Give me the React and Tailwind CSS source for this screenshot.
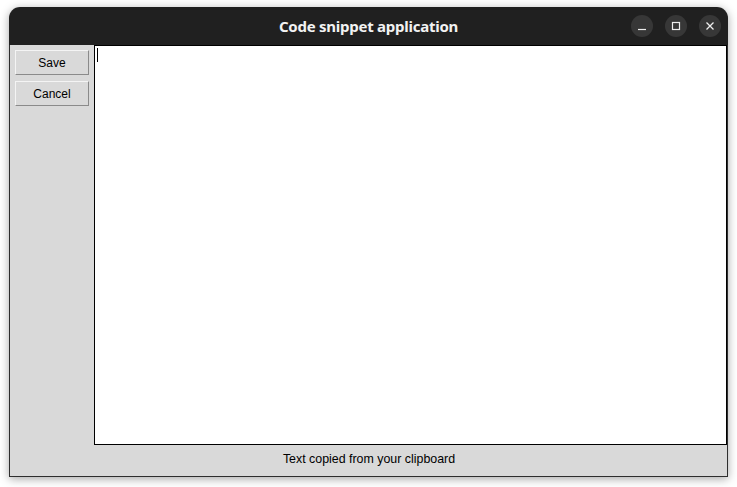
import React from 'react'

function WinButton({ children }) {
  return (
    <div className="w-[22px] h-[22px] rounded-full bg-[#373737] flex items-center justify-center">
      {children}
    </div>
  )
}

function TkButton({ label }) {
  return (
    <button className="w-[74px] h-[25px] bg-[#d9d9d9] border border-t-[#f4f4f4] border-l-[#f4f4f4] border-r-[#8a8a8a] border-b-[#8a8a8a] text-[12px] text-black font-['Liberation_Sans',sans-serif] flex items-center justify-center">
      {label}
    </button>
  )
}

export default function App() {
  return (
    <div className="w-[737px] h-[487px] bg-white pt-[7px] pl-[9px]">
      <div className="w-[719px] h-[470px] flex flex-col rounded-t-[11px] shadow-[0_2px_10px_rgba(0,0,0,0.35)]">
        {/* barra de título */}
        <div className="h-[38px] bg-[#202020] rounded-t-[11px] relative flex items-center justify-center">
          <span className="text-[15px] font-bold text-[#f2f2f2] font-['Noto_Sans',sans-serif] tracking-[-0.25px]">
            Code snippet application
          </span>
          <div className="absolute right-[7px] top-[8px] flex gap-[12px]">
            <WinButton>
              <svg width="10" height="10" viewBox="0 0 10 10">
                <path d="M1 8.5h8" stroke="#eee" strokeWidth="1.2" />
              </svg>
            </WinButton>
            <WinButton>
              <svg width="10" height="10" viewBox="0 0 10 10">
                <rect x="1.5" y="1.5" width="7" height="7" fill="none" stroke="#eee" strokeWidth="1.2" />
              </svg>
            </WinButton>
            <WinButton>
              <svg width="10" height="10" viewBox="0 0 10 10">
                <path d="M1.5 1.5l7 7M8.5 1.5l-7 7" stroke="#eee" strokeWidth="1.3" />
              </svg>
            </WinButton>
          </div>
        </div>

        {/* contenido */}
        <div className="flex-1 bg-[#d9d9d9] border-l border-r border-b border-[#2e2e2e] flex flex-col">
          <div className="flex h-[400px]">
            <div className="w-[84px] pl-[5px] pt-[5px] flex flex-col gap-[6px]">
              <TkButton label="Save" />
              <TkButton label="Cancel" />
            </div>
            <div className="flex-1 bg-white border border-black relative">
              <div className="absolute left-[2px] top-[2px] w-px h-[14px] bg-black" />
            </div>
          </div>
          <div className="flex-1 flex items-center justify-center pb-[2px] pl-[1px]">
            <span className="text-[12.4px] text-black font-['Liberation_Sans',sans-serif]">
              Text copied from your clipboard
            </span>
          </div>
        </div>
      </div>
    </div>
  )
}
